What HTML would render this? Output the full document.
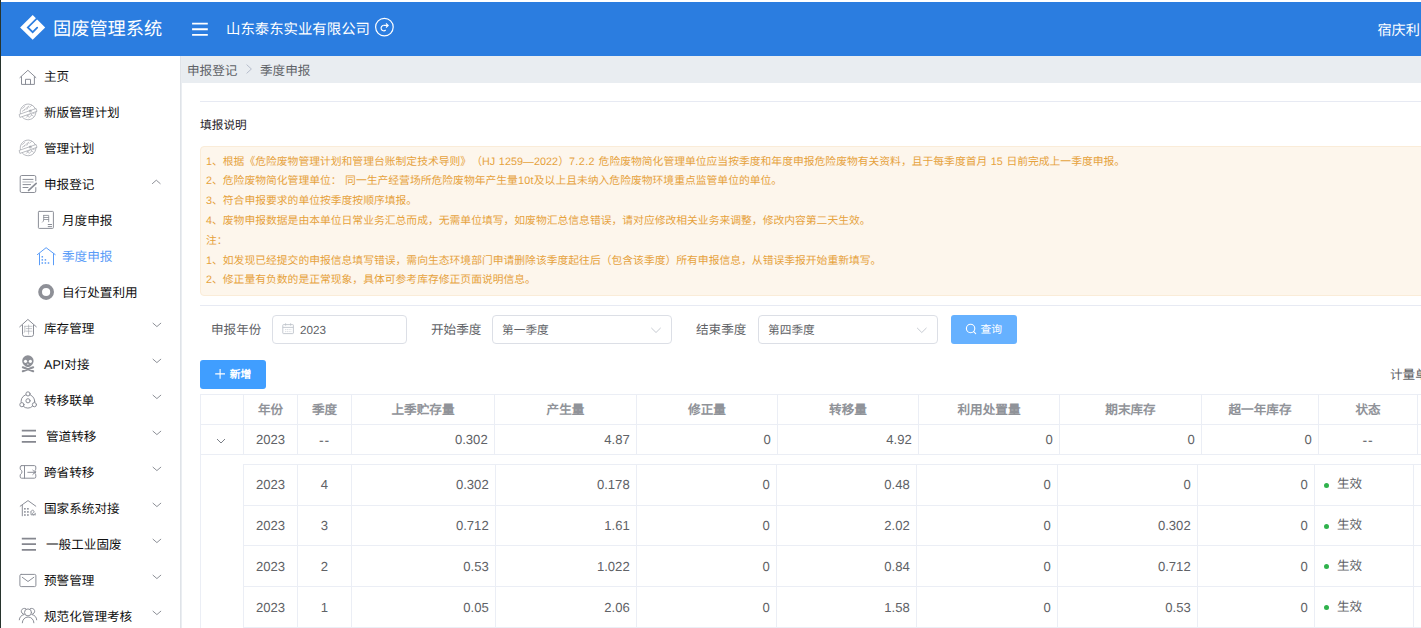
<!DOCTYPE html>
<html lang="zh-CN">
<head>
<meta charset="utf-8">
<title>固废管理系统</title>
<style>
*{box-sizing:border-box;margin:0;padding:0}
html,body{width:1421px;height:628px;overflow:hidden;background:#fff}
body{position:relative;text-rendering:geometricPrecision;text-spacing-trim:space-all;font-kerning:none;font-family:"Liberation Sans",sans-serif;color:#303133;font-size:12.6px}
.abs{position:absolute}
#edge{left:0;top:0;width:1px;height:628px;background:#27342d}
#hdr{left:1px;top:2px;width:1420px;height:54px;background:#2b7de0}
#hdr .title{left:52px;top:1.3px;height:54px;line-height:52px;font-size:18.2px;color:#fff;white-space:nowrap}
#hdr .comp{left:225px;top:1.3px;height:54px;line-height:55px;font-size:14.4px;color:#fff;white-space:nowrap}
#hdr .user{left:1376.4px;top:1.8px;height:54px;line-height:54px;font-size:14.2px;color:#fff;white-space:nowrap}
#side{left:1px;top:56px;width:179px;height:572px;background:#fff}
#sideb{left:180px;top:56px;width:2px;height:572px;background:linear-gradient(90deg,#dfe3e8 0,#dfe3e8 50%,#eaedf1 50%)}
.mi{position:absolute;left:0;width:179px;height:36px;line-height:36px;font-size:12.6px;color:#111;white-space:nowrap}
.mi .t{position:absolute;left:43px;top:0.6px}
.mi.sub .t{left:61px}
.mi.hb .t{left:45px}
.mi.act .t{color:#5a9cf8}
.mi svg.ic{position:absolute;left:18px;top:9px;width:18px;height:18px;overflow:visible}
.mi.sub svg.ic{left:36px}
.mi svg.ch{position:absolute;left:150px;top:12px;width:10px;height:10px}
#crumb{left:182px;top:56px;width:1239px;height:27px;background:#e9edf1;line-height:27px;font-size:12.6px;color:#5f6368;white-space:nowrap}
#crumb span{position:absolute;top:1.5px}
.hr{position:absolute;left:200px;width:1221px;height:1px;background:#e7eaf3}
#tip{left:200px;top:118.5px;font-size:11.7px;line-height:14px;color:#1f2329;white-space:nowrap}
#note{left:200px;top:146px;width:1240px;height:150px;background:#fdf6ec;border:1px solid #faecd8;border-radius:4px}
.nl{word-spacing:.55px;position:absolute;left:206px;height:20px;line-height:20px;font-size:10.8px;color:#e6a23c;white-space:nowrap}
.lbl{position:absolute;top:315.7px;height:29px;line-height:29px;font-size:12.6px;color:#606266;white-space:nowrap}
.inp{position:absolute;top:315px;height:29px;border:1px solid #dcdfe6;border-radius:4px;background:#fff;font-size:11.7px;line-height:27px;color:#606266;white-space:nowrap}
.inp .v{position:absolute;top:0.7px}
.btn{position:absolute;border-radius:3px;color:#fff;font-size:10.8px;font-weight:500;white-space:nowrap}
#unit{left:1390px;top:366.7px;font-size:12.6px;line-height:16px;color:#606266;white-space:nowrap}
/* table */
.vl{position:absolute;width:1px;background:#ebeef5}
.hl{position:absolute;height:1px;background:#ebeef5}
.th{position:absolute;top:395.7px;height:29px;line-height:29px;font-size:12.6px;font-weight:bold;color:#909399;text-align:center;white-space:nowrap}
.td{position:absolute;height:30px;line-height:30px;font-size:12.6px;color:#606266;white-space:nowrap}
.td.n{font-size:13.1px}
.c{text-align:center}.r{text-align:right}
.dot{position:absolute;width:5px;height:5px;border-radius:50%;background:#2fb24c}
</style>
</head>
<body>
<div id="edge" class="abs"></div>

<!-- header -->
<div id="hdr" class="abs">
  <svg class="abs" style="left:18px;top:12px" width="28" height="28" viewBox="0 0 28 28">
    <path d="M13.7 1 L26.2 13.4 L13.7 25.8 L1.1 13.4 Z" fill="#fff"/>
    <path d="M18.7 3.6 L8.8 13.4 L13.7 18.2 L18.2 13.7" fill="none" stroke="#2b7de0" stroke-width="1.75" stroke-linecap="round" stroke-linejoin="miter"/>
  </svg>
  <div class="abs title">固废管理系统</div>
  <svg class="abs" style="left:189px;top:18px" width="20" height="20" viewBox="190 20 20 20"><path d="M192.1 23.6 H207.8 M192.1 29.2 H207.8 M192.1 34.9 H207.8" stroke="#fff" stroke-width="1.9" fill="none"/></svg>
  <div class="abs comp">山东泰东实业有限公司</div>
  <svg class="abs" style="left:373px;top:15px" width="22" height="22" viewBox="374 17 22 22" fill="none" stroke="#fff">
    <circle cx="384.4" cy="27.1" r="8.8" stroke-width="1.2"/>
    <path d="M383.7 25.4 A2.7 2.7 0 1 0 385.7 30" stroke-width="1.15"/>
    <path d="M383.7 25.4 H387.9 M386 23.3 L388.2 25.4 L386 27.5" stroke-width="1.1"/>
  </svg>
  <div class="abs user">宿庆利</div>
</div>

<!-- sidebar -->
<div id="side" class="abs">
  <div class="mi" style="top:2px"><span class="t">主页</span></div>
  <div class="mi" style="top:38px"><span class="t">新版管理计划</span></div>
  <div class="mi" style="top:74px"><span class="t">管理计划</span></div>
  <div class="mi" style="top:110px"><span class="t">申报登记</span></div>
  <div class="mi sub" style="top:146px"><span class="t">月度申报</span></div>
  <div class="mi sub act" style="top:182px"><span class="t">季度申报</span></div>
  <div class="mi sub" style="top:218px"><span class="t">自行处置利用</span></div>
  <div class="mi" style="top:254px"><span class="t">库存管理</span></div>
  <div class="mi" style="top:290px"><span class="t">API对接</span></div>
  <div class="mi" style="top:326px"><span class="t">转移联单</span></div>
  <div class="mi hb" style="top:362px"><span class="t">管道转移</span></div>
  <div class="mi" style="top:398px"><span class="t">跨省转移</span></div>
  <div class="mi" style="top:434px"><span class="t">国家系统对接</span></div>
  <div class="mi hb" style="top:470px"><span class="t">一般工业固废</span></div>
  <div class="mi" style="top:506px"><span class="t">预警管理</span></div>
  <div class="mi" style="top:542px"><span class="t">规范化管理考核</span></div>
</div>
<div id="sideb" class="abs"></div>
<!--ICONS-->
<svg class="abs" style="left:0;top:56px" width="181" height="572" viewBox="0 56 181 572" fill="none" stroke="#8b8e97" stroke-width="1" stroke-linecap="round" stroke-linejoin="round">
<path d="M19.9 77.6 L27.9 70.3 L35.9 77.6 M21.5 76.6 V84.4 H34.4 V76.6 M25.5 84.4 V79.3 H30.5 V84.4"/>
<g transform="translate(28.1 111.9)" stroke-width=".9"><circle r="7.8" stroke-opacity=".7" stroke-dasharray="2.2 .7"/><path d="M-5.5 -3.5 L-3.2 -5.6 M-3.8 -1.8 L-0.6 -4.8 M-1.2 -2.6 L0.6 -5.8 M1.6 -4.8 L3.4 -6.4 M-5.8 -0.6 L-3.6 -2.2 M-3.4 3.2 L-1 1 M-1.6 5.4 L1.2 2.4 M0.8 5.8 L3.6 3.2 M2.6 2 L5.2 4.2 M3.8 0.6 L6.2 1.8 M-2.6 2 L0.4 4.6" stroke-opacity=".6"/><path d="M-8.6 2.4 L8 -3.4 L8.9 -0.6 L-7.8 5.4 Z" fill="#fff" stroke-opacity=".65"/><circle cx="2.2" cy="-1" r="1.5" fill="#8b8e97" stroke="none" fill-opacity=".55"/></g>
<g transform="translate(28.1 147.9)" stroke-width=".9"><circle r="7.8" stroke-opacity=".7" stroke-dasharray="2.2 .7"/><path d="M-5.5 -3.5 L-3.2 -5.6 M-3.8 -1.8 L-0.6 -4.8 M-1.2 -2.6 L0.6 -5.8 M1.6 -4.8 L3.4 -6.4 M-5.8 -0.6 L-3.6 -2.2 M-3.4 3.2 L-1 1 M-1.6 5.4 L1.2 2.4 M0.8 5.8 L3.6 3.2 M2.6 2 L5.2 4.2 M3.8 0.6 L6.2 1.8 M-2.6 2 L0.4 4.6" stroke-opacity=".6"/><path d="M-8.6 2.4 L8 -3.4 L8.9 -0.6 L-7.8 5.4 Z" fill="#fff" stroke-opacity=".65"/><circle cx="2.2" cy="-1" r="1.5" fill="#8b8e97" stroke="none" fill-opacity=".55"/></g>
<path d="M35.8 180.8 V177 a1.5 1.5 0 0 0 -1.5 -1.5 H21.7 a1.5 1.5 0 0 0 -1.5 1.5 V191 a1.5 1.5 0 0 0 1.5 1.5 H34.3 a1.5 1.5 0 0 0 1.5 -1.5 V187.6"/>
<path d="M23 179.4 H33 M23 184.6 H30.6 M23 187.5 H28"/>
<path d="M23 182 H33" stroke-opacity=".45" stroke-width="1.6"/>
<path d="M28.6 190.4 L36.2 183.3" stroke-width="1.7"/>
<rect x="38.4" y="211.4" width="15" height="17" rx="0.8"/>
<path d="M43.7 215.4 H48.7 V221.8 M43.7 215.4 V219.6 Q43.7 221.4 42.5 222.2 M43.7 217.5 H48.7 M43.7 219.5 H48.7" stroke-opacity=".85"/>
<path d="M48.2 224.5 H51.6 M48.2 226.6 H51.6"/>
<path d="M37.4 254.6 L46.1 247.7 L55.2 254.6 M39.5 253.6 V264.8 M53.5 253.6 V264.8" stroke="#5a9cf8"/>
<rect x="41.55" y="256.05" width="1.5" height="1.5" fill="#5a9cf8" stroke="none"/>
<rect x="41.55" y="259.15" width="1.5" height="1.5" fill="#5a9cf8" stroke="none"/>
<rect x="44.65" y="259.15" width="1.5" height="1.5" fill="#5a9cf8" stroke="none"/>
<rect x="41.55" y="262.25" width="1.5" height="1.5" fill="#5a9cf8" stroke="none"/>
<rect x="44.65" y="262.25" width="1.5" height="1.5" fill="#5a9cf8" stroke="none"/>
<rect x="47.75" y="262.25" width="1.5" height="1.5" fill="#5a9cf8" stroke="none"/>
<circle cx="46.1" cy="292" r="6" stroke-width="3.8" stroke="#8e9097"/>
<path d="M19.7 326.8 L27.9 319.4 L36.3 326.8 M22.5 325.2 V334.4 a2 2 0 0 0 2 2 H31.5 a2 2 0 0 0 2 -2 V325.2"/>
<path d="M24.8 326.3 H32 M24.8 326.3 V331 L24.2 332.4 M26.2 328.6 H31.6 M25.8 331.2 H32 M28.6 325 V334.2" stroke-opacity=".55" stroke-width=".9"/>
<g stroke="none" fill="#8e9097"><circle cx="27.9" cy="361" r="5.7"/><rect x="25" y="364" width="5.8" height="3.6" rx="1"/></g>
<g stroke="none" fill="#fff"><circle cx="25.5" cy="361.3" r="1.6"/><circle cx="30.4" cy="361.3" r="1.6"/><path d="M27.9 363.2 l-0.8 1.6 h1.6 z"/></g>
<path d="M22.8 367.2 L33.2 371.3 M33.2 367.2 L22.8 371.3" stroke="#fff" stroke-width="3.6"/>
<path d="M22.8 367.2 L33.2 371.3 M33.2 367.2 L22.8 371.3" stroke="#8e9097" stroke-width="2"/>
<circle cx="27.9" cy="401.3" r="6.8"/>
<circle cx="28" cy="393.9" r="2.1" fill="#fff"/>
<circle cx="21.9" cy="404.7" r="2.1" fill="#fff"/>
<circle cx="34.4" cy="404.7" r="2.1" fill="#fff"/>
<circle cx="28" cy="400.8" r="2.1" fill="#fff"/>
<path d="M21.8 430.6 H36 M21.8 436.1 H36 M21.8 441.90000000000003 H36" stroke-width="1.7" stroke-linecap="butt" stroke="#85878f"/>
<path d="M21.8 538.6 H36 M21.8 544.1 H36 M21.8 549.9 H36" stroke-width="1.7" stroke-linecap="butt" stroke="#85878f"/>
<path d="M21.6 465.6 H34.4 Q35.8 465.6 35.8 467 V469.2 Q34.2 470.4 35.8 471.9 Q34.2 473.4 35.8 474.8 V476.8 Q35.8 478.2 34.4 478.2 H21.6 Q20.2 478.2 20.2 476.8 V474.8 Q22 473.3 22 471.9 Q22 470.4 20.2 469.2 V467 Q20.2 465.6 21.6 465.6 Z"/>
<path d="M24.5 465.6 V478.2 M27.8 472.3 H34.6 M32.8 470.2 L35 472.3 L32.8 474.5"/>
<path d="M20.2 506.2 L28 500.6 L35.8 506.2 M22.3 505.4 V515.8"/>
<rect x="24.099999999999998" y="508.0" width="1.6" height="1.6" fill="#8b8e97" stroke="none"/>
<rect x="24.099999999999998" y="511.09999999999997" width="1.6" height="1.6" fill="#8b8e97" stroke="none"/>
<rect x="24.099999999999998" y="514.2" width="1.6" height="1.6" fill="#8b8e97" stroke="none"/>
<rect x="27.099999999999998" y="508.0" width="1.6" height="1.6" fill="#8b8e97" stroke="none"/>
<rect x="27.099999999999998" y="511.09999999999997" width="1.6" height="1.6" fill="#8b8e97" stroke="none"/>
<rect x="27.099999999999998" y="514.2" width="1.6" height="1.6" fill="#8b8e97" stroke="none"/>
<path d="M30.6 512 L32.6 509.8 L34.4 512 M31 512 V514.8 H34 M33.4 512.4 a1.3 1.3 0 1 0 1.6 1.6 M35.2 513.5 V515" stroke-width=".9"/>
<rect x="19.9" y="574.4" width="16" height="12.2" rx="1.3"/>
<path d="M22.3 577.3 L28 581.5 L33.8 577.3"/>
<path d="M24.2 614.3 a3 3 0 1 1 1.6 -5.6 M31.8 614.3 a3 3 0 1 0 -1.6 -5.6" />
<circle cx="28" cy="612.4" r="3.5" fill="#fff"/>
<path d="M22.3 622.8 a5.8 5.8 0 0 1 11.6 0 M19.3 619.8 Q19.6 615.6 23.8 614.6 M36.7 619.8 Q36.4 615.6 32.2 614.6"/>
<path d="M152.4 183.6 L156.3 180.2 L160.2 183.6" stroke="#80838b" stroke-width=".9"/>
<path d="M153 323.2 L156.9 326.6 L160.8 323.2" stroke="#80838b" stroke-width=".9"/>
<path d="M153 359.2 L156.9 362.6 L160.8 359.2" stroke="#80838b" stroke-width=".9"/>
<path d="M153 395.2 L156.9 398.6 L160.8 395.2" stroke="#80838b" stroke-width=".9"/>
<path d="M153 431.2 L156.9 434.6 L160.8 431.2" stroke="#80838b" stroke-width=".9"/>
<path d="M153 467.2 L156.9 470.6 L160.8 467.2" stroke="#80838b" stroke-width=".9"/>
<path d="M153 503.2 L156.9 506.6 L160.8 503.2" stroke="#80838b" stroke-width=".9"/>
<path d="M153 539.2 L156.9 542.6 L160.8 539.2" stroke="#80838b" stroke-width=".9"/>
<path d="M153 575.2 L156.9 578.6 L160.8 575.2" stroke="#80838b" stroke-width=".9"/>
<path d="M153 611.2 L156.9 614.6 L160.8 611.2" stroke="#80838b" stroke-width=".9"/>
</svg>
<!--/ICONS-->

<!-- breadcrumb -->
<div id="crumb" class="abs">
  <span style="left:5px">申报登记</span>
  <svg class="abs" style="left:63px;top:8px" width="8" height="10" viewBox="0 0 8 10"><path d="M1.6 0.6 L6.4 5 L1.6 9.4" fill="none" stroke="#b6bdcb" stroke-width="1"/></svg>
  <span style="left:78px">季度申报</span>
</div>

<div class="hr" style="top:101px"></div>
<div id="tip" class="abs">填报说明</div>
<div id="note" class="abs"></div>
<div class="nl" style="top:152px">1、根据《危险废物管理计划和管理台账制定技术导则》（<span style="letter-spacing:.05px">HJ 1259—2022</span>）<span style="letter-spacing:.42px">7.2.2</span> 危险废物简化管理单位应当按季度和年度申报危险废物有关资料，且于每季度首月 15 日前完成上一季度申报。</div>
<div class="nl" style="top:171px">2、危险废物简化管理单位： 同一生产经营场所危险废物年产生量<span style="letter-spacing:.3px">10t</span>及以上且未纳入危险废物环境重点监管单位的单位。</div>
<div class="nl" style="top:191px">3、符合申报要求的单位按季度按顺序填报。</div>
<div class="nl" style="top:211px">4、废物申报数据是由本单位日常业务汇总而成，无需单位填写，如废物汇总信息错误，请对应修改相关业务来调整，修改内容第二天生效。</div>
<div class="nl" style="top:231px">注：</div>
<div class="nl" style="top:251px">1、如发现已经提交的申报信息填写错误，需向生态环境部门申请删除该季度起往后（包含该季度）所有申报信息，从错误季报开始重新填写。</div>
<div class="nl" style="top:270px">2、修正量有负数的是正常现象，具体可参考库存修正页面说明信息。</div>
<div class="hr" style="top:305px"></div>

<!-- filters -->
<div class="lbl" style="left:211px">申报年份</div>
<div class="inp" style="left:272px;width:135px"><span class="v" style="left:27px">2023</span></div>
<div class="lbl" style="left:431px">开始季度</div>
<div class="inp" style="left:492px;width:180px"><span class="v" style="left:9px">第一季度</span></div>
<div class="lbl" style="left:696px">结束季度</div>
<div class="inp" style="left:758px;width:180px"><span class="v" style="left:9px">第四季度</span></div>
<svg class="abs" style="left:270px;top:310px" width="680" height="40" viewBox="270 310 680 40" fill="none" stroke="#c0c4cc" stroke-width=".9">
  <rect x="282.8" y="324.6" width="10.6" height="9" rx="0.6"/>
  <path d="M282.8 327.4 H293.4 M285.6 323.3 V325.6 M290.6 323.3 V325.6"/>
  <path d="M285 329.6 H291.4 M285 331.6 H291.4" stroke-opacity=".6" stroke-dasharray="1.2 .6"/>
  <path d="M651.3 327.9 L656 332.5 L660.7 327.9"/>
  <path d="M917.1 327.9 L921.8 332.5 L926.5 327.9"/>
</svg>
<div class="btn" style="left:951px;top:315px;width:66px;height:29px;background:#66b1ff"><span style="position:absolute;left:29.4px;top:0.5px;line-height:29px">查询</span>
  <svg class="abs" style="left:13px;top:7px" width="14" height="14" viewBox="964 322 14 14" fill="none" stroke="#fff" stroke-width="1.1"><circle cx="970.6" cy="328.5" r="4.2"/><path d="M973.7 331.6 L975.7 333.6" stroke-linecap="round"/></svg>
</div>
<div class="btn" style="left:200px;top:360px;width:66px;height:29px;background:#409eff"><span style="position:absolute;left:29.8px;top:1px;line-height:29px;font-weight:bold">新增</span>
  <svg class="abs" style="left:14px;top:8px" width="12" height="12" viewBox="214 368 12 12" fill="none" stroke="#fff" stroke-width="1.1"><path d="M215.2 373.9 H225 M220.1 369 V378.8"/></svg>
</div>
<div id="unit" class="abs">计量单位：吨</div>

<!-- table -->
<!--TBL-->
<div class="hl" style="left:200px;top:394px;width:1221px"></div>
<div class="hl" style="left:200px;top:424px;width:1221px"></div>
<div class="hl" style="left:200px;top:454px;width:1221px"></div>
<div class="vl" style="left:200px;top:394px;height:234px"></div>
<div class="vl" style="left:243px;top:394px;height:60px"></div>
<div class="vl" style="left:297px;top:394px;height:60px"></div>
<div class="vl" style="left:351px;top:394px;height:60px"></div>
<div class="vl" style="left:494px;top:394px;height:60px"></div>
<div class="vl" style="left:636px;top:394px;height:60px"></div>
<div class="vl" style="left:777px;top:394px;height:60px"></div>
<div class="vl" style="left:918px;top:394px;height:60px"></div>
<div class="vl" style="left:1059px;top:394px;height:60px"></div>
<div class="vl" style="left:1201px;top:394px;height:60px"></div>
<div class="vl" style="left:1318px;top:394px;height:60px"></div>
<div class="vl" style="left:1417px;top:394px;height:60px"></div>
<div class="hl" style="left:243px;top:464px;width:1178px"></div>
<div class="hl" style="left:243px;top:505px;width:1178px"></div>
<div class="hl" style="left:243px;top:545px;width:1178px"></div>
<div class="hl" style="left:243px;top:586px;width:1178px"></div>
<div class="hl" style="left:243px;top:627px;width:1178px"></div>
<div class="vl" style="left:243px;top:464px;height:164px"></div>
<div class="vl" style="left:297px;top:464px;height:164px"></div>
<div class="vl" style="left:351px;top:464px;height:164px"></div>
<div class="vl" style="left:495px;top:464px;height:164px"></div>
<div class="vl" style="left:636px;top:464px;height:164px"></div>
<div class="vl" style="left:776px;top:464px;height:164px"></div>
<div class="vl" style="left:916px;top:464px;height:164px"></div>
<div class="vl" style="left:1057px;top:464px;height:164px"></div>
<div class="vl" style="left:1197px;top:464px;height:164px"></div>
<div class="vl" style="left:1314px;top:464px;height:164px"></div>
<div class="vl" style="left:1413px;top:464px;height:164px"></div>
<div class="th" style="left:244px;width:53px">年份</div>
<div class="th" style="left:298px;width:53px">季度</div>
<div class="th" style="left:352px;width:142px">上季贮存量</div>
<div class="th" style="left:495px;width:141px">产生量</div>
<div class="th" style="left:637px;width:140px">修正量</div>
<div class="th" style="left:778px;width:140px">转移量</div>
<div class="th" style="left:919px;width:140px">利用处置量</div>
<div class="th" style="left:1060px;width:141px">期末库存</div>
<div class="th" style="left:1202px;width:116px">超一年库存</div>
<div class="th" style="left:1319px;width:98px">状态</div>
<div class="td n c" style="left:244px;top:424.6px;width:53px;">2023</div>
<div class="td n c" style="left:298px;top:424.6px;width:53px;font-size:14px;letter-spacing:.9px;">--</div>
<div class="td n r" style="left:352px;top:424.6px;width:142px;padding-right:6.3px;">0.302</div>
<div class="td n r" style="left:495px;top:424.6px;width:141px;padding-right:6.3px;">4.87</div>
<div class="td n r" style="left:637px;top:424.6px;width:140px;padding-right:6.3px;">0</div>
<div class="td n r" style="left:778px;top:424.6px;width:140px;padding-right:6.3px;">4.92</div>
<div class="td n r" style="left:919px;top:424.6px;width:140px;padding-right:6.3px;">0</div>
<div class="td n r" style="left:1060px;top:424.6px;width:141px;padding-right:6.3px;">0</div>
<div class="td n r" style="left:1202px;top:424.6px;width:116px;padding-right:6.3px;">0</div>
<div class="td n c" style="left:1319px;top:424.6px;width:98px;font-size:14px;letter-spacing:.9px;">--</div>
<svg class="abs" style="left:216px;top:436px" width="10" height="10" viewBox="0 0 10 10"><path d="M1 3 L5 7 L9 3" fill="none" stroke="#7b7f87" stroke-width="1"/></svg>
<div class="td n c" style="left:244px;top:464.8px;width:53px;height:40px;line-height:40px;">2023</div>
<div class="td n c" style="left:298px;top:464.8px;width:53px;height:40px;line-height:40px;">4</div>
<div class="td n r" style="left:352px;top:464.8px;width:143px;height:40px;line-height:40px;padding-right:6.3px;">0.302</div>
<div class="td n r" style="left:496px;top:464.8px;width:140px;height:40px;line-height:40px;padding-right:6.3px;">0.178</div>
<div class="td n r" style="left:637px;top:464.8px;width:139px;height:40px;line-height:40px;padding-right:6.3px;">0</div>
<div class="td n r" style="left:777px;top:464.8px;width:139px;height:40px;line-height:40px;padding-right:6.3px;">0.48</div>
<div class="td n r" style="left:917px;top:464.8px;width:140px;height:40px;line-height:40px;padding-right:6.3px;">0</div>
<div class="td n r" style="left:1058px;top:464.8px;width:139px;height:40px;line-height:40px;padding-right:6.3px;">0</div>
<div class="td n r" style="left:1198px;top:464.8px;width:116px;height:40px;line-height:40px;padding-right:6.3px;">0</div>
<div class="dot" style="left:1324px;top:482.5px"></div>
<div class="td" style="left:1337px;top:464.0px;height:40px;line-height:40px">生效</div>
<div class="td n c" style="left:244px;top:505.8px;width:53px;height:40px;line-height:40px;">2023</div>
<div class="td n c" style="left:298px;top:505.8px;width:53px;height:40px;line-height:40px;">3</div>
<div class="td n r" style="left:352px;top:505.8px;width:143px;height:40px;line-height:40px;padding-right:6.3px;">0.712</div>
<div class="td n r" style="left:496px;top:505.8px;width:140px;height:40px;line-height:40px;padding-right:6.3px;">1.61</div>
<div class="td n r" style="left:637px;top:505.8px;width:139px;height:40px;line-height:40px;padding-right:6.3px;">0</div>
<div class="td n r" style="left:777px;top:505.8px;width:139px;height:40px;line-height:40px;padding-right:6.3px;">2.02</div>
<div class="td n r" style="left:917px;top:505.8px;width:140px;height:40px;line-height:40px;padding-right:6.3px;">0</div>
<div class="td n r" style="left:1058px;top:505.8px;width:139px;height:40px;line-height:40px;padding-right:6.3px;">0.302</div>
<div class="td n r" style="left:1198px;top:505.8px;width:116px;height:40px;line-height:40px;padding-right:6.3px;">0</div>
<div class="dot" style="left:1324px;top:523.5px"></div>
<div class="td" style="left:1337px;top:505.0px;height:40px;line-height:40px">生效</div>
<div class="td n c" style="left:244px;top:546.8px;width:53px;height:40px;line-height:40px;">2023</div>
<div class="td n c" style="left:298px;top:546.8px;width:53px;height:40px;line-height:40px;">2</div>
<div class="td n r" style="left:352px;top:546.8px;width:143px;height:40px;line-height:40px;padding-right:6.3px;">0.53</div>
<div class="td n r" style="left:496px;top:546.8px;width:140px;height:40px;line-height:40px;padding-right:6.3px;">1.022</div>
<div class="td n r" style="left:637px;top:546.8px;width:139px;height:40px;line-height:40px;padding-right:6.3px;">0</div>
<div class="td n r" style="left:777px;top:546.8px;width:139px;height:40px;line-height:40px;padding-right:6.3px;">0.84</div>
<div class="td n r" style="left:917px;top:546.8px;width:140px;height:40px;line-height:40px;padding-right:6.3px;">0</div>
<div class="td n r" style="left:1058px;top:546.8px;width:139px;height:40px;line-height:40px;padding-right:6.3px;">0.712</div>
<div class="td n r" style="left:1198px;top:546.8px;width:116px;height:40px;line-height:40px;padding-right:6.3px;">0</div>
<div class="dot" style="left:1324px;top:563.5px"></div>
<div class="td" style="left:1337px;top:546.0px;height:40px;line-height:40px">生效</div>
<div class="td n c" style="left:244px;top:587.8px;width:53px;height:40px;line-height:40px;">2023</div>
<div class="td n c" style="left:298px;top:587.8px;width:53px;height:40px;line-height:40px;">1</div>
<div class="td n r" style="left:352px;top:587.8px;width:143px;height:40px;line-height:40px;padding-right:6.3px;">0.05</div>
<div class="td n r" style="left:496px;top:587.8px;width:140px;height:40px;line-height:40px;padding-right:6.3px;">2.06</div>
<div class="td n r" style="left:637px;top:587.8px;width:139px;height:40px;line-height:40px;padding-right:6.3px;">0</div>
<div class="td n r" style="left:777px;top:587.8px;width:139px;height:40px;line-height:40px;padding-right:6.3px;">1.58</div>
<div class="td n r" style="left:917px;top:587.8px;width:140px;height:40px;line-height:40px;padding-right:6.3px;">0</div>
<div class="td n r" style="left:1058px;top:587.8px;width:139px;height:40px;line-height:40px;padding-right:6.3px;">0.53</div>
<div class="td n r" style="left:1198px;top:587.8px;width:116px;height:40px;line-height:40px;padding-right:6.3px;">0</div>
<div class="dot" style="left:1324px;top:604.5px"></div>
<div class="td" style="left:1337px;top:587.0px;height:40px;line-height:40px">生效</div>
<!--/TBL-->
</body>
</html>
